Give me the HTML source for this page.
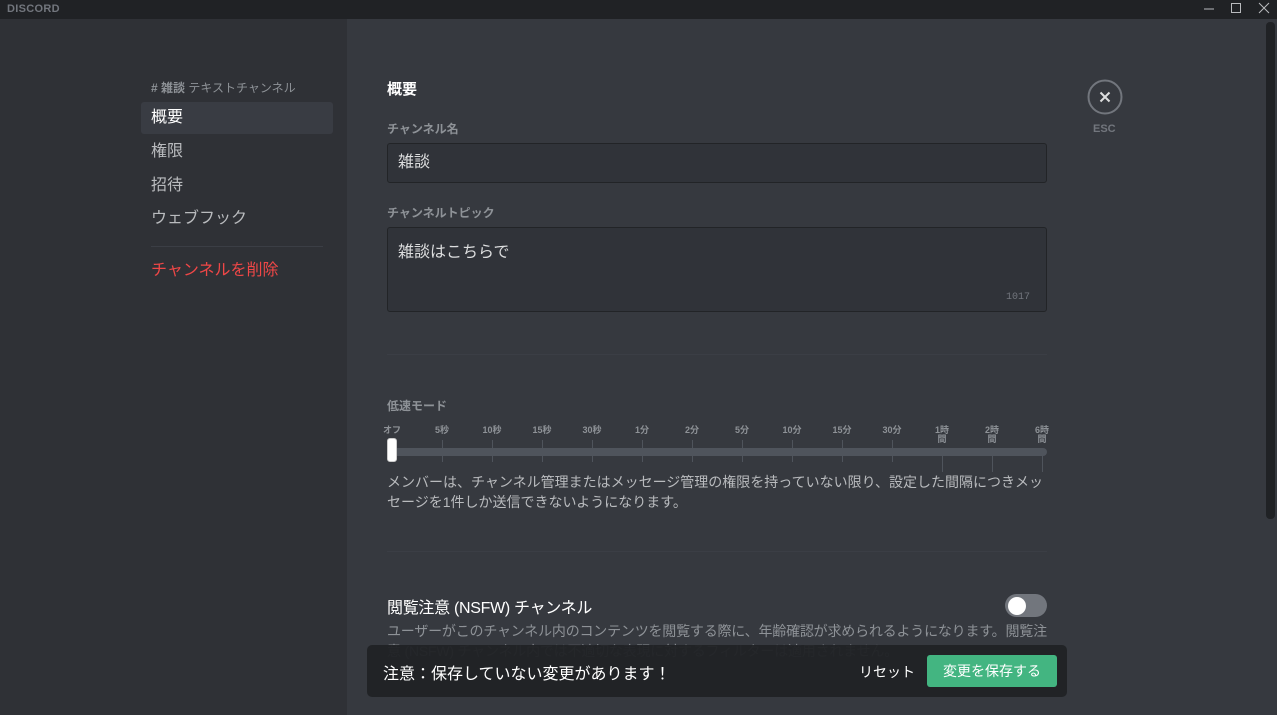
<!DOCTYPE html>
<html><head><meta charset="utf-8"><style>
*{margin:0;padding:0;box-sizing:border-box}
body{width:1277px;height:715px;overflow:hidden;background:#36393f;font-family:"Liberation Sans","Noto Sans CJK JP",sans-serif;position:relative;color:#dcddde}
.abs{position:absolute}
.tb{left:0;top:0;width:1277px;height:19px;background:#202225}
.side{left:0;top:19px;width:347px;height:696px;background:#2f3136}
.nav{left:141px;width:192px;height:32px;font-size:16px;color:#b9bbbe;padding-left:10px;line-height:32px}
.lbl{font-size:12px;font-weight:bold;color:#8e9297}
.inp{background:#303339;border:1px solid #222427;border-radius:3px;color:#dcddde;font-size:16px;padding-left:10px}
.tick{width:1px;background:#4f545c;top:440px;height:22px}
.tk2{width:1px;background:#4f545c;top:452px;height:20px}
.tl{font-size:9px;color:#8e9297;font-weight:bold;text-align:center;width:30px;line-height:9px;top:426px}
</style></head><body>
<div class="abs tb"></div>
<div class="abs" style="left:7px;top:3px;font-size:11px;font-weight:bold;color:#72767d;letter-spacing:.3px">DISCORD</div>
<svg class="abs" style="left:1200px;top:0" width="77" height="19"><path d="M4 9h10" stroke="#b9bbbe"/><rect x="31.5" y="3.5" width="9" height="9" fill="none" stroke="#b9bbbe"/><path d="M59 3l10 10M69 3l-10 10" stroke="#b9bbbe"/></svg>
<div class="abs side"></div>
<div class="abs" style="left:151px;top:79px;font-size:12px;color:#8e9297"><b>#&nbsp;雑談</b> テキストチャンネル</div>
<div class="abs nav" style="top:102px;background:#393c43;color:#fff;border-radius:3px">概要</div>
<div class="abs nav" style="top:136px">権限</div>
<div class="abs nav" style="top:170px">招待</div>
<div class="abs nav" style="top:203px">ウェブフック</div>
<div class="abs" style="left:151px;top:246px;width:172px;height:1px;background:#3b3e45"></div>
<div class="abs nav" style="top:255px;color:#f04747">チャンネルを削除</div>

<div class="abs" style="left:387px;top:78px;font-size:15px;font-weight:bold;color:#fff">概要</div>
<div class="abs lbl" style="left:387px;top:120px">チャンネル名</div>
<div class="abs inp" style="left:387px;top:143px;width:660px;height:40px;line-height:38px">雑談</div>
<div class="abs lbl" style="left:387px;top:204px">チャンネルトピック</div>
<div class="abs inp" style="left:387px;top:227px;width:660px;height:85px;padding-top:10px">雑談はこちらで</div>
<div class="abs" style="left:1006px;top:292px;font-size:10px;color:#72767d;font-family:'Liberation Mono',monospace">1017</div>
<div class="abs" style="left:387px;top:354px;width:660px;height:1px;background:#3b3e45"></div>
<div class="abs lbl" style="left:387px;top:397px">低速モード</div>
<div class="abs" style="left:389px;top:448px;width:658px;height:8px;border-radius:4px;background:#4f545c"></div>
<div class="abs tl" style="left:377px">オフ</div>
<div class="abs tl" style="left:427px">5秒</div>
<div class="abs tl" style="left:477px">10秒</div>
<div class="abs tl" style="left:527px">15秒</div>
<div class="abs tl" style="left:577px">30秒</div>
<div class="abs tl" style="left:627px">1分</div>
<div class="abs tl" style="left:677px">2分</div>
<div class="abs tl" style="left:727px">5分</div>
<div class="abs tl" style="left:777px">10分</div>
<div class="abs tl" style="left:827px">15分</div>
<div class="abs tl" style="left:877px">30分</div>
<div class="abs tl" style="left:927px">1時<br>間</div>
<div class="abs tl" style="left:977px">2時<br>間</div>
<div class="abs tl" style="left:1027px">6時<br>間</div>
<div class="abs tick" style="left:442px"></div>
<div class="abs tick" style="left:492px"></div>
<div class="abs tick" style="left:542px"></div>
<div class="abs tick" style="left:592px"></div>
<div class="abs tick" style="left:642px"></div>
<div class="abs tick" style="left:692px"></div>
<div class="abs tick" style="left:742px"></div>
<div class="abs tick" style="left:792px"></div>
<div class="abs tick" style="left:842px"></div>
<div class="abs tick" style="left:892px"></div>
<div class="abs tk2" style="left:942px"></div>
<div class="abs tk2" style="left:992px"></div>
<div class="abs tk2" style="left:1042px"></div>
<div class="abs" style="left:387px;top:438px;width:10px;height:24px;background:#fff;border-radius:3px;border:1px solid #ccc"></div>
<div class="abs" style="left:387px;top:472px;width:665px;font-size:14px;line-height:20px;color:#b9bbbe">メンバーは、チャンネル管理またはメッセージ管理の権限を持っていない限り、設定した間隔につきメッセージを1件しか送信できないようになります。</div>
<div class="abs" style="left:387px;top:551px;width:660px;height:1px;background:#3b3e45"></div>
<div class="abs" style="left:387px;top:594px;font-size:16px;color:#fff;letter-spacing:-.3px">閲覧注意 (NSFW) チャンネル</div>
<div class="abs" style="left:1005px;top:594px;width:42px;height:23px;border-radius:12px;background:#72767d"></div>
<div class="abs" style="left:1008px;top:597px;width:18px;height:18px;border-radius:9px;background:#fff"></div>
<div class="abs" style="left:387px;top:621px;width:660px;font-size:14px;line-height:20px;color:#8e9297;letter-spacing:-.2px">ユーザーがこのチャンネル内のコンテンツを閲覧する際に、年齢確認が求められるようになります。閲覧注意 (NSFW) チャンネル内では不適切な表現に対するフィルターは適用されません。</div>
<div class="abs" style="left:367px;top:645px;width:700px;height:52px;background:#202225;opacity:.96;border-radius:5px"></div>
<div class="abs" style="left:383px;top:660px;font-size:16px;color:#fff">注意：保存していない変更があります！</div>
<div class="abs" style="left:859px;top:662px;font-size:14px;color:#fff">リセット</div>
<div class="abs" style="left:927px;top:655px;width:130px;height:32px;background:#43b581;border-radius:3px;color:#fff;font-size:14px;text-align:center;line-height:32px">変更を保存する</div>

<svg class="abs" style="left:1087px;top:79px" width="36" height="36"><circle cx="18" cy="18" r="16.5" fill="none" stroke="#72767d" stroke-width="2"/><path d="M13.5 13.5l9 9M22.5 13.5l-9 9" stroke="#dcddde" stroke-width="2"/></svg>
<div class="abs" style="left:1093px;top:123px;font-size:11px;font-weight:bold;color:#72767d">ESC</div>
<div class="abs" style="left:1266px;top:22px;width:9px;height:497px;background:#202225;border-radius:4px"></div>
</body></html>
